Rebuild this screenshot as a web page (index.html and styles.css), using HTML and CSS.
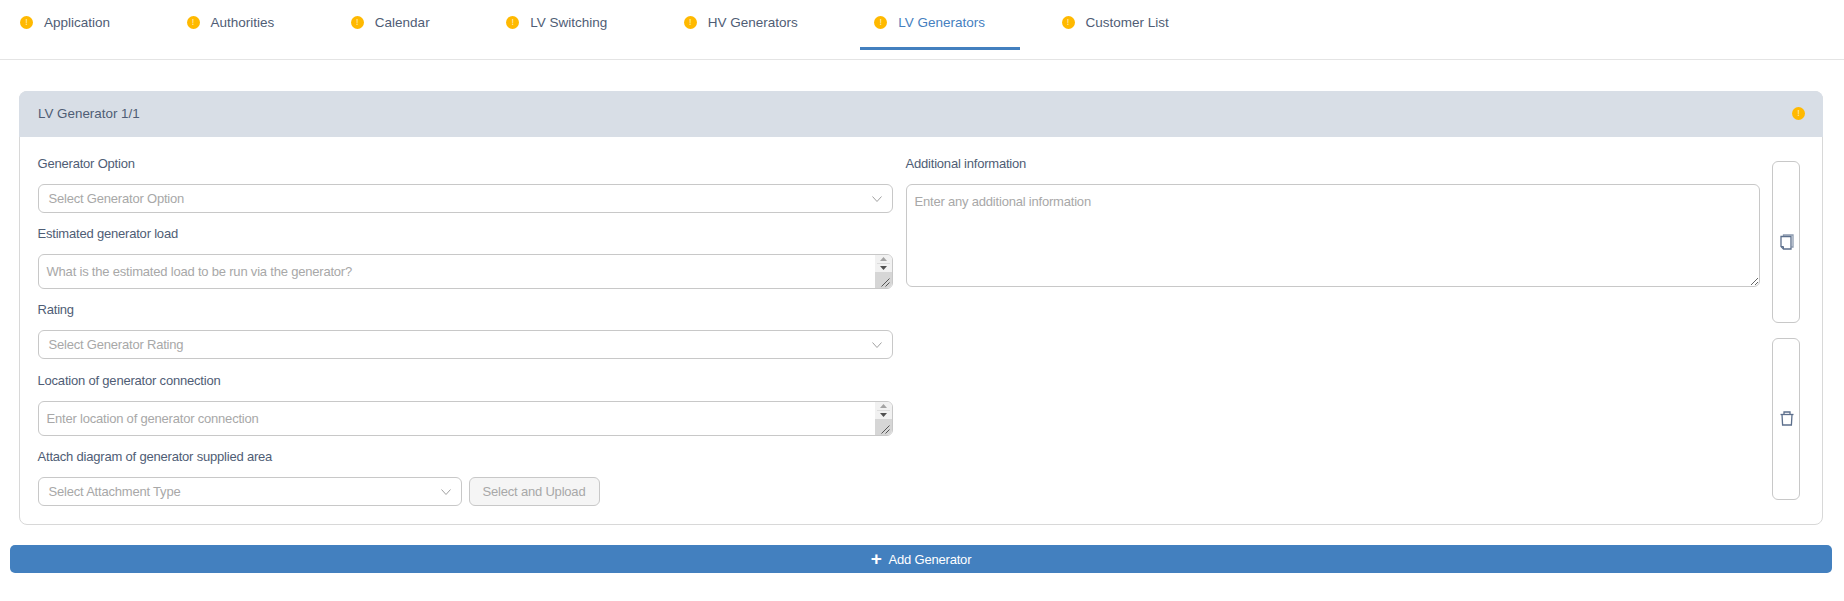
FILE: index.html
```html
<!DOCTYPE html>
<html lang="en">
<head>
    <meta charset="UTF-8">
    <meta name="viewport" content="width=device-width, initial-scale=1.0">
    <title>LV Generators</title>
    <link rel="stylesheet" href="styles.css">
</head>
<body>
    <nav class="tabs">
        <a class="tab"><span class="dot">!</span>Application</a>
        <a class="tab"><span class="dot">!</span>Authorities</a>
        <a class="tab"><span class="dot">!</span>Calendar</a>
        <a class="tab"><span class="dot">!</span>LV Switching</a>
        <a class="tab"><span class="dot">!</span>HV Generators</a>
        <a class="tab active"><span class="dot">!</span>LV Generators</a>
        <a class="tab"><span class="dot">!</span>Customer List</a>
    </nav>

    <main class="content">
        <section class="card">
            <header class="card-head">
                <span>LV Generator 1/1</span>
                <span class="dot dot-head">!</span>
            </header>
            <div class="card-body">
                <div class="col">
                    <label class="field-label">Generator Option</label>
                    <div class="select">
                        <span>Select Generator Option</span>
                        <svg class="chevron" viewBox="0 0 10 6"><path d="M0.5 0.5 L5 5.5 L9.5 0.5"/></svg>
                    </div>

                    <label class="field-label">Estimated generator load</label>
                    <div class="area-wrap">
                        <textarea class="area" placeholder="What is the estimated load to be run via the generator?"></textarea>
                        <div class="scroll">
                            <svg class="scroll-arrows" viewBox="0 0 17 17"><path d="M5 6 L8.5 2 L12 6 Z" fill="#a3a3a3"/><path d="M2 8.5 H15" stroke="#dcdcdc"/><path d="M5 11 H12 L8.5 15 Z" fill="#505050"/></svg>
                            <div class="scroll-thumb"><svg class="grip" viewBox="0 0 9 9"><path d="M0.5 8.5 L8.5 0.5 M4.5 8.5 L8.5 4.5" stroke="#555" fill="none"/></svg></div>
                        </div>
                    </div>

                    <label class="field-label">Rating</label>
                    <div class="select select-spaced">
                        <span>Select Generator Rating</span>
                        <svg class="chevron" viewBox="0 0 10 6"><path d="M0.5 0.5 L5 5.5 L9.5 0.5"/></svg>
                    </div>

                    <label class="field-label">Location of generator connection</label>
                    <div class="area-wrap">
                        <textarea class="area" placeholder="Enter location of generator connection"></textarea>
                        <div class="scroll">
                            <svg class="scroll-arrows" viewBox="0 0 17 17"><path d="M5 6 L8.5 2 L12 6 Z" fill="#a3a3a3"/><path d="M2 8.5 H15" stroke="#dcdcdc"/><path d="M5 11 H12 L8.5 15 Z" fill="#505050"/></svg>
                            <div class="scroll-thumb"><svg class="grip" viewBox="0 0 9 9"><path d="M0.5 8.5 L8.5 0.5 M4.5 8.5 L8.5 4.5" stroke="#555" fill="none"/></svg></div>
                        </div>
                    </div>

                    <label class="field-label">Attach diagram of generator supplied area</label>
                    <div class="attach-row">
                        <div class="select">
                            <span>Select Attachment Type</span>
                            <svg class="chevron" viewBox="0 0 10 6"><path d="M0.5 0.5 L5 5.5 L9.5 0.5"/></svg>
                        </div>
                        <button class="upload" type="button" disabled>Select and Upload</button>
                    </div>
                </div>

                <div class="col">
                    <label class="field-label">Additional information</label>
                    <textarea class="info" placeholder="Enter any additional information"></textarea>
                </div>

                <div class="actions">
                    <button class="action" type="button">
                        <svg viewBox="0 0 14 16" width="14" height="16" fill="none" stroke="#5c6f8c" stroke-width="1.3">
                            <path d="M3.5 2 V1 H13 V13 H11.5" stroke="#8d9bb0"/>
                            <path d="M1 2.5 H11 V15 H3.5 L1 12.5 Z"/>
                            <path d="M1 12.5 H3.5 V15" stroke-width="1"/>
                        </svg>
                    </button>
                    <button class="action" type="button">
                        <svg viewBox="0 0 14 15" width="14" height="15" fill="none" stroke="#5c6f8c" stroke-width="1.3">
                            <path d="M0.5 3.5 H13.5"/>
                            <path d="M4 3.5 V1 H10 V3.5"/>
                            <path d="M2 3.5 L2.6 14 H11.4 L12 3.5"/>
                        </svg>
                    </button>
                </div>
            </div>
        </section>

        <button class="add-btn" type="button"><span class="plus">+</span>Add Generator</button>
    </main>
</body>
</html>
```

FILE: styles.css
```css
* {
    box-sizing: border-box;
}

body {
    font-family: "Liberation Sans", Arial, sans-serif;
    font-size: 13px;
    letter-spacing: -0.2px;
    background-color: #ffffff;
    color: #4f5d75;
    margin: 0;
}

.tabs {
    display: flex;
    gap: 27.5px;
    height: 60px;
    padding-left: 6px;
    border-bottom: 1px solid #e4e4e4;
}

.tab {
    display: flex;
    align-items: center;
    height: 50px;
    padding: 0 35px 2px 14px;
    border-bottom: 3px solid transparent;
    font-size: 13.5px;
    letter-spacing: 0;
}

.tab.active {
    color: #4580c0;
    border-bottom-color: #4380bf;
}

.dot {
    flex: none;
    display: inline-block;
    width: 13px;
    height: 13px;
    margin-right: 11px;
    border-radius: 50%;
    background-color: #ffb900;
    color: #fff0bf;
    font-size: 9px;
    line-height: 13px;
    text-align: center;
}

.content {
    padding: 31px 12px 0 10px;
}

.card {
    margin: 0 9px 20px;
    border: 1px solid #d8d8d8;
    border-radius: 8px;
}

.card-head {
    display: flex;
    justify-content: space-between;
    align-items: center;
    height: 46px;
    margin: -1px -1px 0;
    padding: 0 18px 2px 19px;
    background-color: #d8dee6;
    border-radius: 8px 8px 0 0;
    font-size: 13.4px;
    letter-spacing: 0;
}

.dot-head {
    margin-right: 0;
}

.card-body {
    display: grid;
    grid-template-columns: 855.5px 854px 28px;
    column-gap: 12.5px;
    padding: 18px 20px 18px 17.5px;
}

.col {
    display: flex;
    flex-direction: column;
}

.field-label {
    height: 16px;
    line-height: 18px;
    margin-bottom: 13px;
}

.select {
    display: flex;
    justify-content: space-between;
    align-items: center;
    flex: 1;
    height: 29px;
    min-height: 29px;
    padding: 0 10px;
    margin-bottom: 12px;
    border: 1px solid #c8c8c8;
    border-radius: 6px;
    color: #a8a8a8;
}

.select-spaced {
    margin-bottom: 13px;
}

.chevron {
    width: 10px;
    height: 6px;
    fill: none;
    stroke: #a0a0a0;
}

.area-wrap {
    position: relative;
    height: 35px;
    margin-bottom: 12px;
}

.area,
.info {
    display: block;
    width: 100%;
    padding: 9px 8px;
    border: 1px solid #c8c8c8;
    border-radius: 6px;
    font-family: inherit;
    font-size: 13px;
    letter-spacing: -0.2px;
    color: #4f5d75;
    overflow: hidden;
}

.area {
    height: 35px;
    resize: none;
}

.info {
    height: 103px;
    resize: both;
}

.area::placeholder,
.info::placeholder {
    color: #a8a8a8;
}

.scroll {
    position: absolute;
    top: 1px;
    right: 1px;
    bottom: 1px;
    width: 17px;
    background-color: #f1f1f1;
    border-radius: 0 5px 5px 0;
    overflow: hidden;
}

.scroll-arrows {
    display: block;
    width: 17px;
    height: 17px;
}

.scroll-thumb {
    position: relative;
    height: 16px;
    background-color: #d6d6d6;
}

.grip {
    position: absolute;
    right: 2px;
    bottom: 1px;
    width: 9px;
    height: 9px;
}

.attach-row {
    display: flex;
    gap: 7px;
}

.attach-row .select {
    flex: none;
    width: 424px;
    margin-bottom: 0;
}

.upload {
    width: 131px;
    height: 29px;
    background-color: #f5f5f5;
    border: 1px solid #c8c8c8;
    border-radius: 6px;
    font-family: inherit;
    font-size: 13px;
    letter-spacing: -0.2px;
    color: #a8a8a8;
}

.actions {
    display: flex;
    flex-direction: column;
    gap: 15px;
    padding-top: 5.5px;
}

.action {
    display: flex;
    justify-content: center;
    align-items: center;
    height: 162px;
    padding: 0;
    background-color: #ffffff;
    border: 1px solid #c8c8c8;
    border-radius: 6px;
}

.action svg {
    margin-left: 2px;
}

.add-btn {
    display: flex;
    justify-content: center;
    align-items: center;
    width: 100%;
    height: 28px;
    padding: 0;
    background-color: #4380bf;
    border: none;
    border-radius: 5px;
    font-family: inherit;
    font-size: 13px;
    letter-spacing: -0.2px;
    color: #ffffff;
}

.plus {
    margin-right: 7px;
    font-size: 19px;
    font-weight: bold;
    line-height: 18px;
}
```
